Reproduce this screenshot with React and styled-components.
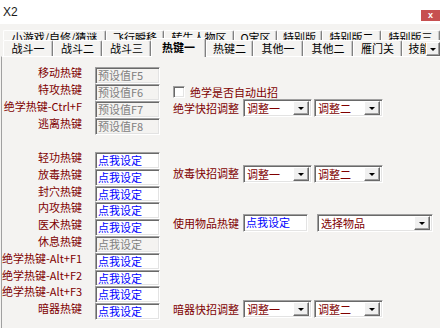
import React from "react";
import styled, { createGlobalStyle, css } from "styled-components";

const GlobalStyle = createGlobalStyle`
  html, body {
    margin: 0;
    padding: 0;
    background: #f4f3f1;
  }
  body {
    font-family: "Noto Sans CJK SC", "Liberation Sans", sans-serif;
    font-size: 11px;
  }
`;

const sunken = css`
  box-sizing: border-box;
  border: 1px solid;
  border-color: #a0a0a0 #fff #fff #a0a0a0;
  box-shadow: inset 1px 1px 0 #696969, inset -1px -1px 0 #e3e3e3;
`;

const raised = css`
  box-sizing: border-box;
  background: #f0f0f0;
  border: 1px solid;
  border-color: #fff #696969 #696969 #fff;
  box-shadow: inset -1px -1px 0 #a0a0a0;
`;

const backTabs = [
  { name: "小游戏/自修/猜谜", w: 103 },
  { name: "飞行瞬移", w: 58 },
  { name: "转生人物区", w: 70 },
  { name: "Q宝区", w: 43 },
  { name: "特别版", w: 45 },
  { name: "特别版二", w: 59 },
  { name: "特别版三", w: 59 },
];

const frontTabs = [
  { name: "战斗一", w: 50 },
  { name: "战斗二", w: 49 },
  { name: "战斗三", w: 49 },
  { name: "热键一", w: 55, active: true },
  { name: "热键二", w: 47 },
  { name: "其他一", w: 50 },
  { name: "其他二", w: 50 },
  { name: "雁门关", w: 49 },
  { name: "技能一", w: 46 },
];

const presetKeys = [
  { label: "移动热键", value: "预设值F5" },
  { label: "特攻热键", value: "预设值F6" },
  { label: "绝学热键-Ctrl+F", value: "预设值F7" },
  { label: "逃离热键", value: "预设值F8" },
];

const skillKeys = [
  { label: "轻功热键" },
  { label: "放毒热键" },
  { label: "封穴热键" },
  { label: "内攻热键" },
  { label: "医术热键" },
  { label: "休息热键", disabled: true },
  { label: "绝学热键-Alt+F1" },
  { label: "绝学热键-Alt+F2" },
  { label: "绝学热键-Alt+F3" },
  { label: "暗器热键" },
];

const Window = styled.div`
  width: 440px;
  height: 328px;
  overflow: hidden;
  display: flex;
  flex-direction: column;
  background: #f4f3f1;
`;

const TitleBar = styled.div`
  height: 24px;
  flex-shrink: 0;
  background: #fff;
  display: flex;
  align-items: flex-start;
`;

const Title = styled.div`
  padding: 6px 0 0 3px;
  font-family: "Liberation Sans", sans-serif;
  font-size: 12px;
  line-height: 12px;
  color: #1a1a1a;
`;

const CloseButton = styled.div`
  margin: 10px 0 0 auto;
  width: 19px;
  height: 11px;
  background: #c75050;
  color: #fff;
  font-family: "Liberation Sans", sans-serif;
  font-size: 9px;
  font-weight: bold;
  line-height: 11px;
  text-align: center;
`;

const TabStrip = styled.div`
  position: relative;
  flex-shrink: 0;
  padding-top: 6px;
`;

const BackRow = styled.div`
  display: flex;
  height: 10px;
  overflow: hidden;
  padding-left: 3px;
`;

const FrontRow = styled.div`
  display: flex;
  align-items: flex-end;
  height: 16px;
  padding-left: 3px;
`;

const Tab = styled.div`
  box-sizing: border-box;
  flex-shrink: 0;
  width: ${(p) => p.$w}px;
  height: ${(p) => (p.$active ? 19 : 16)}px;
  margin-bottom: ${(p) => (p.$active ? -1 : 0)}px;
  position: relative;
  z-index: ${(p) => (p.$active ? 1 : 0)};
  background: #f4f3f1;
  border-top: 1px solid #fff;
  border-left: 1px solid #fff;
  border-right: 1px solid #808080;
  border-radius: 2px 2px 0 0;
  box-shadow: inset -1px 0 0 #c8c8c8;
  color: #000;
  font-weight: ${(p) => (p.$active ? "bold" : "normal")};
  text-align: center;
  white-space: nowrap;
  overflow: hidden;
  line-height: ${(p) => (p.$back ? 13 : p.$active ? 16 : 14)}px;
`;

const ScrollButton = styled.div`
  ${raised};
  position: absolute;
  right: 0;
  top: 18px;
  width: 14px;
  height: 14px;
  display: flex;
  align-items: center;
  justify-content: center;
  z-index: 2;
`;

const Arrow = styled.div`
  width: 0;
  height: 0;
  border-left: 3px solid transparent;
  border-right: 3px solid transparent;
  border-top: 3px solid #000;
  margin-top: 1px;
`;

const Panel = styled.div`
  flex: 1;
  margin-left: 1px;
  border-top: 1px solid #fff;
  border-left: 1px solid #a0a0a0;
  padding-top: 10px;
`;

const Section = styled.div`
  display: grid;
  grid-template-columns: 80px 65px 1fr;
  column-gap: 13px;
  grid-auto-rows: ${(p) => p.$row}px;
  margin-top: ${(p) => p.$gap || 0}px;
`;

const KeyLabel = styled.div`
  grid-column: 1;
  align-self: start;
  margin-top: -1px;
  text-align: right;
  white-space: nowrap;
  line-height: 12px;
  color: #800000;
`;

const KeyBox = styled.div`
  ${sunken};
  grid-column: 2;
  height: 100%;
  padding-left: 2px;
  line-height: 14px;
  white-space: nowrap;
  overflow: hidden;
  background: ${(p) => (p.$disabled ? "#f4f3f1" : "#fff")};
  color: ${(p) => (p.$disabled ? "#808080" : "#0000ff")};
`;

const SideRow = styled.div`
  grid-column: 3;
  grid-row: ${(p) => p.$row};
  align-self: start;
  margin-top: ${(p) => p.$shift}px;
  display: flex;
  align-items: center;
`;

const SideLabel = styled.div`
  width: 70px;
  flex-shrink: 0;
  white-space: nowrap;
  color: #800000;
  line-height: 14px;
  margin-top: -1px;
`;

const CheckBox = styled.div`
  ${sunken};
  width: 12px;
  height: 12px;
  background: #fff;
  margin-right: 5px;
`;

const CheckText = styled.div`
  color: #800000;
  line-height: 14px;
  white-space: nowrap;
`;

const Combo = styled.div`
  ${sunken};
  width: ${(p) => p.$w}px;
  height: 18px;
  padding: 2px 2px 2px 3px;
  margin-left: ${(p) => p.$gap || 0}px;
  background: #fff;
  display: flex;
  align-items: center;
  color: #800000;
  white-space: nowrap;
`;

const ComboText = styled.span`
  line-height: 14px;
`;

const DropButton = styled.div`
  ${raised};
  margin-left: auto;
  width: 16px;
  height: 14px;
  display: flex;
  align-items: center;
  justify-content: center;
`;

const ItemKey = styled(KeyBox)`
  width: 65px;
  height: 18px;
  line-height: 15px;
  color: #0000ff;
`;

const ComboBox = ({ w, gap, text }) => (
  <Combo $w={w} $gap={gap}>
    <ComboText>{text}</ComboText>
    <DropButton>
      <Arrow />
    </DropButton>
  </Combo>
);

const AdjustRow = ({ row, shift, label }) => (
  <SideRow $row={row} $shift={shift}>
    <SideLabel>{label}</SideLabel>
    <ComboBox w={69} text="调整一" />
    <ComboBox w={69} gap={2} text="调整二" />
  </SideRow>
);

export default function App() {
  return (
    <>
      <GlobalStyle />
      <Window>
        <TitleBar>
          <Title>X2</Title>
          <CloseButton>x</CloseButton>
        </TitleBar>
        <TabStrip>
          <BackRow>
            {backTabs.map((t) => (
              <Tab key={t.name} $w={t.w} $back>
                {t.name}
              </Tab>
            ))}
          </BackRow>
          <FrontRow>
            {frontTabs.map((t) => (
              <Tab key={t.name} $w={t.w} $active={t.active}>
                {t.name}
              </Tab>
            ))}
          </FrontRow>
          <ScrollButton>
            <Arrow />
          </ScrollButton>
        </TabStrip>
        <Panel>
          <Section $row={17}>
            {presetKeys.map((k, i) => (
              <React.Fragment key={k.label}>
                <KeyLabel style={{ gridRow: i + 1 }}>{k.label}</KeyLabel>
                <KeyBox $disabled style={{ gridRow: i + 1 }}>
                  {k.value}
                </KeyBox>
              </React.Fragment>
            ))}
            <SideRow $row={2} $shift={1}>
              <CheckBox />
              <CheckText>绝学是否自动出招</CheckText>
            </SideRow>
            <AdjustRow row={3} shift={-2} label="绝学快招调整" />
          </Section>
          <Section $row={16.8} $gap={17}>
            {skillKeys.map((k, i) => (
              <React.Fragment key={k.label}>
                <KeyLabel style={{ gridRow: i + 1 }}>{k.label}</KeyLabel>
                <KeyBox $disabled={k.disabled} style={{ gridRow: i + 1 }}>
                  点我设定
                </KeyBox>
              </React.Fragment>
            ))}
            <AdjustRow row={2} shift={-4} label="放毒快招调整" />
            <SideRow $row={5} $shift={-5}>
              <SideLabel>使用物品热键</SideLabel>
              <ItemKey>点我设定</ItemKey>
              <ComboBox w={116} gap={9} text="选择物品" />
            </SideRow>
            <AdjustRow row={10} shift={-3} label="暗器快招调整" />
          </Section>
        </Panel>
      </Window>
    </>
  );
}
